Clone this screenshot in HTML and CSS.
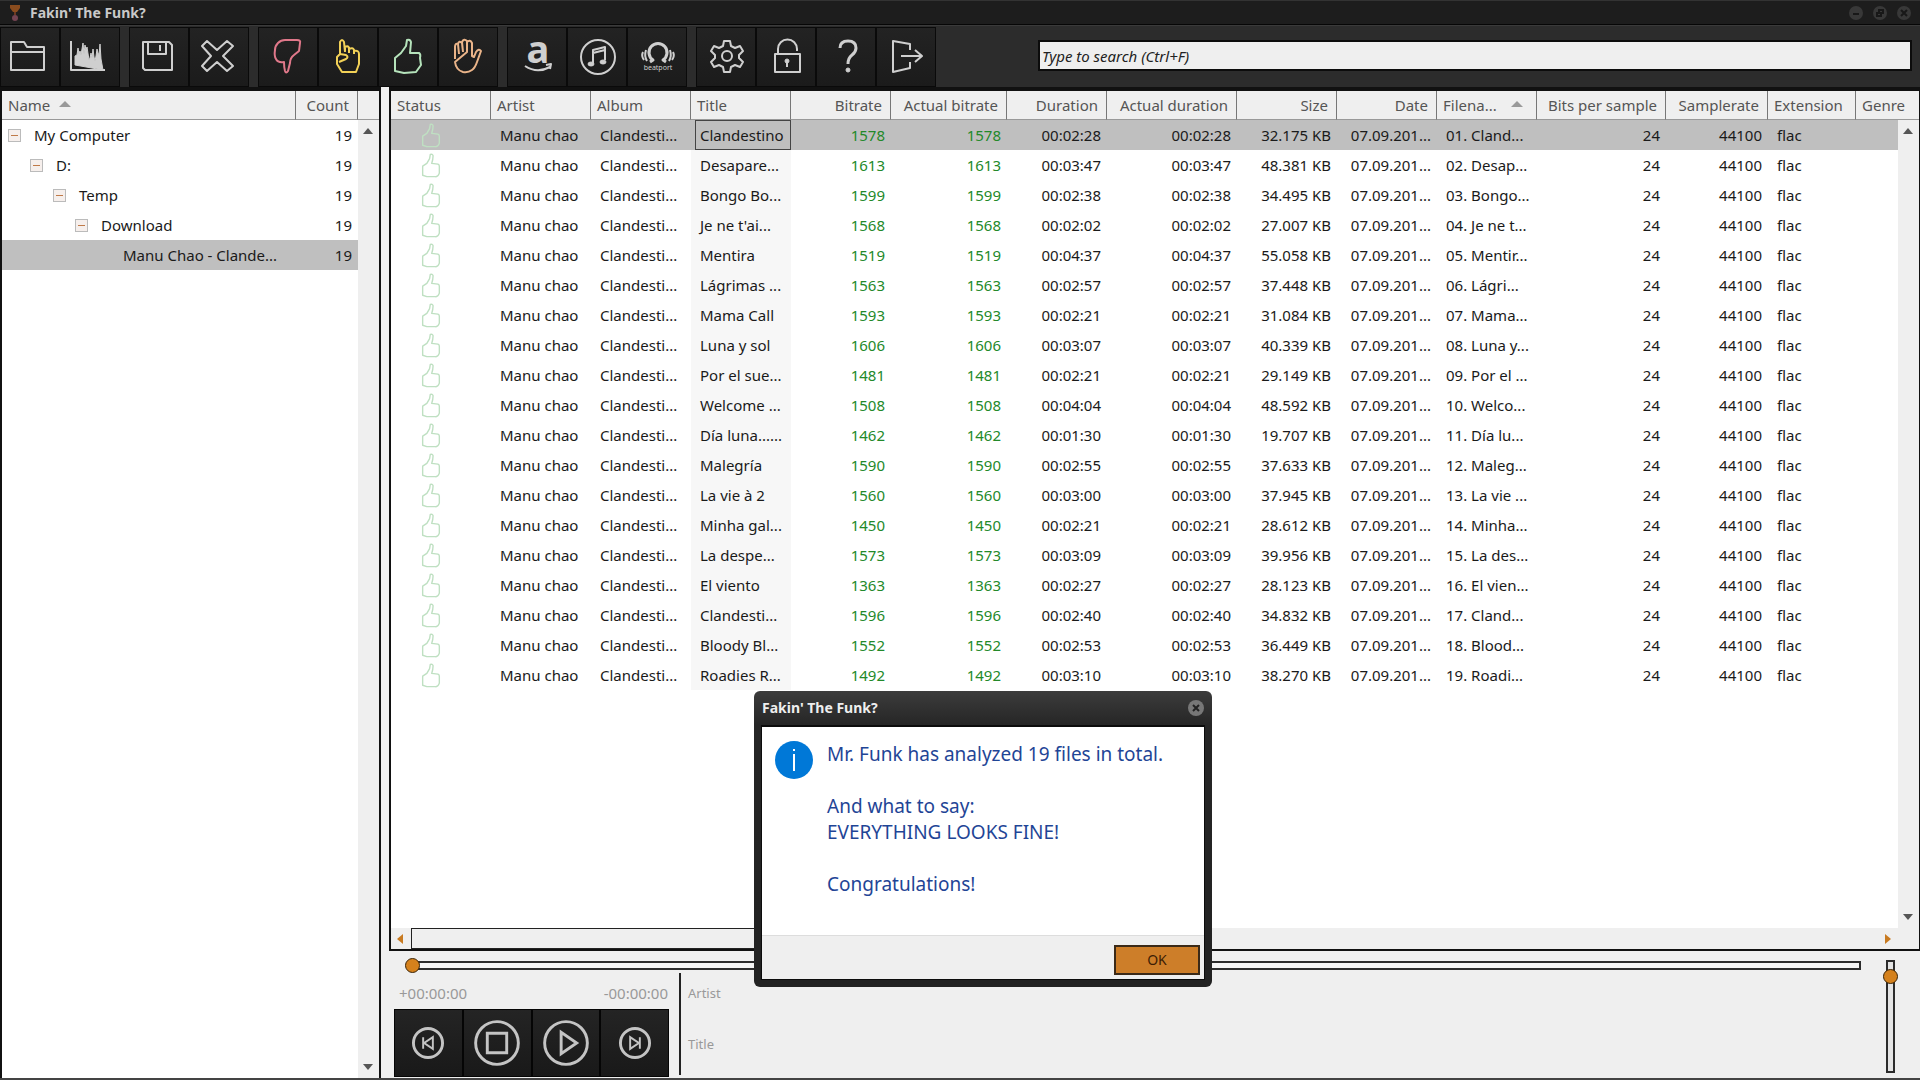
FILE: index.html
```html
<!DOCTYPE html>
<html lang="en">
<head>
<meta charset="utf-8">
<title>Fakin' The Funk?</title>
<link rel="stylesheet" href="styles.css">
</head>
<body>
<svg class="defs" aria-hidden="true">
  <symbol id="thumb" viewBox="0 0 28 36"><path d="M13 2q3-1 4 2 0 5-2 11l9 1q2 1 2 3v10q-2 6-6 5H8l-6-2V19l6-4 4-7Z"/></symbol>
</svg>
<div class="app">
  <header class="titlebar">
    <svg class="logo" viewBox="0 0 12 18" aria-hidden="true"><path d="M1 1h10v3l-3 4H4L1 4Z" fill="#8a4c1e"/><path d="M5 8h2v3H5Z" fill="#6b3a22"/><circle cx="6" cy="14" r="3" fill="#744452"/></svg>
    <h1>Fakin' The Funk?</h1>
    <div class="window-buttons">
      <button type="button" aria-label="Minimize"><svg viewBox="0 0 16 16"><circle cx="8" cy="8" r="7"/><path d="M5 9h6"/></svg></button>
      <button type="button" aria-label="Restore"><svg viewBox="0 0 16 16"><circle cx="8" cy="8" r="7"/><path d="M5 8h4v3H5ZM7 7V5h4v4"/></svg></button>
      <button type="button" aria-label="Close"><svg viewBox="0 0 16 16"><circle cx="8" cy="8" r="7"/><path d="M5 5l6 6M11 5l-6 6"/></svg></button>
    </div>
  </header>

  <div class="toolbar">
    <div class="group">
      <button type="button" aria-label="Open folder"><svg viewBox="0 0 60 60"><path d="M11 43V15H24L27 20H44V43ZM11 25H44"/></svg></button>
      <button type="button" aria-label="Spectrum"><svg viewBox="0 0 60 60"><path d="M11 14V43H45"/><path class="solid" d="M15 38V29l2-1 1-7 1 6 1-3 1 4 2-12 1 11 1-9 1 5 1-3 2 13 1-2 1-5 1 5 1-9 1 8 1 4 1-5 1-7 1 4 1 2 1-11 1 15 2 11Z"/></svg></button>
    </div>
    <div class="group">
      <button type="button" aria-label="Save"><svg viewBox="0 0 60 60"><path d="M14 15H40L43 18V43H16L14 41ZM19 15V27H37V15M31 18V24"/></svg></button>
      <button type="button" aria-label="Remove"><svg viewBox="0 0 60 60"><path d="M18 14l10 9 10-9 6 5-10 10 10 10-6 5-10-9-10 9-5-5 9-10-9-10Z"/></svg></button>
    </div>
    <div class="group">
      <button type="button" class="red" aria-label="Fake"><svg viewBox="0 0 60 60"><path d="M20 16q3-3 7-3h12q4 0 3 3l-1 8-5 4q-4 3-4 8l-2 8q-2 3-3 0-1-4-1-9-6 1-8-3-2-3-1-9 0-4 3-7Z"/></svg></button>
      <button type="button" class="yellow" aria-label="Warning"><svg viewBox="0 0 60 60"><path d="M22 28V15q2-4 4 0l1 10M27 24v-4q4-2 4 2v4M31 22q4-2 5 1v4M36 24q5-1 5 3v10l-3 8H24l-5-8v-7l3-3 6 1q3 2 0 4l-7 3"/></svg></button>
      <button type="button" class="green" aria-label="Good"><svg viewBox="0 0 60 60"><path d="M29 13q3-1 4 2l-1 11h9q2 1 1 5l1 7-5 7-12 1-9-2V31l6-5 5-7Z"/></svg></button>
      <button type="button" class="orange" aria-label="Stop analysis"><svg viewBox="0 0 60 60"><path d="M17 32V20q0-4 3-3l1 10M21 27l-1-10q1-4 4-1l1 9M25 25l-1-10q2-4 5-1v11M29 25V15q3-3 5 1v13l2 1 2-5q3-4 5-1l-4 11q-2 6-5 8-4 3-9 2-7-2-8-10Z"/></svg></button>
    </div>
    <div class="group">
      <button type="button" aria-label="Amazon"><svg viewBox="0 0 60 60"><text class="letter" x="31" y="36" text-anchor="middle">a</text><path class="thin" d="M18 39Q30 47 43 40M39 38l5-1-1 5"/></svg></button>
      <button type="button" aria-label="iTunes"><svg viewBox="0 0 60 60"><circle class="thin" cx="31" cy="30" r="17"/><path d="M26 36V23l12-3v13M26 26l12-3"/><ellipse class="solid" cx="24" cy="37" rx="3" ry="2"/><ellipse class="solid" cx="36" cy="35" rx="3" ry="2"/></svg></button>
      <button type="button" aria-label="Beatport"><svg viewBox="0 0 60 60"><path class="heavy" d="M23 35l3-2a9 9 0 1 1 10 0l3 2"/><path d="M20 34q-3-5-1-11M42 34q3-5 1-11M17 33q-3-4-1-8M45 33q3-4 1-8"/><text class="tiny" x="31" y="43" text-anchor="middle">beatport</text></svg></button>
    </div>
    <div class="group">
      <button type="button" aria-label="Settings"><svg viewBox="0 0 60 60"><path d="M28 14h6l1 5 4 2 5-2 3 5-4 4v3l4 4-3 5-5-2-4 2-1 5h-6l-1-5-4-2-5 2-3-5 4-4v-3l-4-4 3-5 5 2 4-2Z"/><circle cx="31" cy="29" r="5"/></svg></button>
      <button type="button" aria-label="Unlock"><svg viewBox="0 0 60 60"><path d="M19 27H44V45H19ZM22 27V22a9 9 0 0 1 19 0v2M31 35v5"/><circle class="solid" cx="31" cy="34" r="2"/></svg></button>
      <button type="button" aria-label="Help"><svg viewBox="0 0 60 60"><path class="heavy" d="M24 21q0-7 8-7t8 7q0 4-4 7-4 3-4 9"/><circle class="solid" cx="32" cy="43" r="2"/></svg></button>
      <button type="button" aria-label="Exit"><svg viewBox="0 0 60 60"><path d="M34 23V17L17 14V45L34 41V35M25 29H45M39 23l7 6-7 6"/></svg></button>
    </div>
    <input class="search" type="text" placeholder="Type to search (Ctrl+F)" aria-label="Search">
  </div>

  <div class="workspace">
    <aside class="folders">
      <table class="tree">
        <colgroup><col><col class="c-count"><col class="c-bar"></colgroup>
        <thead><tr><th>Name <span class="sort"></span></th><th class="num">Count</th><th></th></tr></thead>
        <tbody>
          <tr><td><div class="node l0"><button type="button" aria-label="Collapse"></button>My Computer</div></td><td class="num">19</td></tr>
          <tr><td><div class="node l1"><button type="button" aria-label="Collapse"></button>D:</div></td><td class="num">19</td></tr>
          <tr><td><div class="node l2"><button type="button" aria-label="Collapse"></button>Temp</div></td><td class="num">19</td></tr>
          <tr><td><div class="node l3"><button type="button" aria-label="Collapse"></button>Download</div></td><td class="num">19</td></tr>
          <tr class="selected"><td><div class="node l4">Manu Chao - Clande...</div></td><td class="num">19</td></tr>
        </tbody>
      </table>
      <div class="vbar"><span class="up"></span><span class="down"></span></div>
    </aside>

    <main class="main">
      <section class="files">
        <table class="tracks">
          <colgroup><col class="w100"><col class="w100"><col class="w100"><col class="w100"><col class="w100"><col class="w116"><col class="w100"><col class="w130"><col class="w100"><col class="w100"><col class="w100"><col class="w129"><col class="w102"><col class="w88"><col></colgroup>
          <thead><tr><th>Status</th><th>Artist</th><th>Album</th><th>Title</th><th class="num">Bitrate</th><th class="num">Actual bitrate</th><th class="num">Duration</th><th class="num">Actual duration</th><th class="num">Size</th><th class="num">Date</th><th>Filena... <span class="sort far"></span></th><th class="num">Bits per sample</th><th class="num">Samplerate</th><th>Extension</th><th>Genre</th></tr></thead>
          <tbody>
            <tr class="selected"><td><svg class="ok"><use href="#thumb"/></svg></td><td>Manu chao</td><td>Clandesti...</td><td class="title focus">Clandestino</td><td class="num rate">1578</td><td class="num rate">1578</td><td class="num">00:02:28</td><td class="num">00:02:28</td><td class="num">32.175 KB</td><td class="num">07.09.201...</td><td>01. Cland...</td><td class="num">24</td><td class="num">44100</td><td>flac</td><td></td></tr>
            <tr><td><svg class="ok"><use href="#thumb"/></svg></td><td>Manu chao</td><td>Clandesti...</td><td class="title">Desapare...</td><td class="num rate">1613</td><td class="num rate">1613</td><td class="num">00:03:47</td><td class="num">00:03:47</td><td class="num">48.381 KB</td><td class="num">07.09.201...</td><td>02. Desap...</td><td class="num">24</td><td class="num">44100</td><td>flac</td><td></td></tr>
            <tr><td><svg class="ok"><use href="#thumb"/></svg></td><td>Manu chao</td><td>Clandesti...</td><td class="title">Bongo Bo...</td><td class="num rate">1599</td><td class="num rate">1599</td><td class="num">00:02:38</td><td class="num">00:02:38</td><td class="num">34.495 KB</td><td class="num">07.09.201...</td><td>03. Bongo...</td><td class="num">24</td><td class="num">44100</td><td>flac</td><td></td></tr>
            <tr><td><svg class="ok"><use href="#thumb"/></svg></td><td>Manu chao</td><td>Clandesti...</td><td class="title">Je ne t'ai...</td><td class="num rate">1568</td><td class="num rate">1568</td><td class="num">00:02:02</td><td class="num">00:02:02</td><td class="num">27.007 KB</td><td class="num">07.09.201...</td><td>04. Je ne t...</td><td class="num">24</td><td class="num">44100</td><td>flac</td><td></td></tr>
            <tr><td><svg class="ok"><use href="#thumb"/></svg></td><td>Manu chao</td><td>Clandesti...</td><td class="title">Mentira</td><td class="num rate">1519</td><td class="num rate">1519</td><td class="num">00:04:37</td><td class="num">00:04:37</td><td class="num">55.058 KB</td><td class="num">07.09.201...</td><td>05. Mentir...</td><td class="num">24</td><td class="num">44100</td><td>flac</td><td></td></tr>
            <tr><td><svg class="ok"><use href="#thumb"/></svg></td><td>Manu chao</td><td>Clandesti...</td><td class="title">Lágrimas ...</td><td class="num rate">1563</td><td class="num rate">1563</td><td class="num">00:02:57</td><td class="num">00:02:57</td><td class="num">37.448 KB</td><td class="num">07.09.201...</td><td>06. Lágri...</td><td class="num">24</td><td class="num">44100</td><td>flac</td><td></td></tr>
            <tr><td><svg class="ok"><use href="#thumb"/></svg></td><td>Manu chao</td><td>Clandesti...</td><td class="title">Mama Call</td><td class="num rate">1593</td><td class="num rate">1593</td><td class="num">00:02:21</td><td class="num">00:02:21</td><td class="num">31.084 KB</td><td class="num">07.09.201...</td><td>07. Mama...</td><td class="num">24</td><td class="num">44100</td><td>flac</td><td></td></tr>
            <tr><td><svg class="ok"><use href="#thumb"/></svg></td><td>Manu chao</td><td>Clandesti...</td><td class="title">Luna y sol</td><td class="num rate">1606</td><td class="num rate">1606</td><td class="num">00:03:07</td><td class="num">00:03:07</td><td class="num">40.339 KB</td><td class="num">07.09.201...</td><td>08. Luna y...</td><td class="num">24</td><td class="num">44100</td><td>flac</td><td></td></tr>
            <tr><td><svg class="ok"><use href="#thumb"/></svg></td><td>Manu chao</td><td>Clandesti...</td><td class="title">Por el sue...</td><td class="num rate">1481</td><td class="num rate">1481</td><td class="num">00:02:21</td><td class="num">00:02:21</td><td class="num">29.149 KB</td><td class="num">07.09.201...</td><td>09. Por el ...</td><td class="num">24</td><td class="num">44100</td><td>flac</td><td></td></tr>
            <tr><td><svg class="ok"><use href="#thumb"/></svg></td><td>Manu chao</td><td>Clandesti...</td><td class="title">Welcome ...</td><td class="num rate">1508</td><td class="num rate">1508</td><td class="num">00:04:04</td><td class="num">00:04:04</td><td class="num">48.592 KB</td><td class="num">07.09.201...</td><td>10. Welco...</td><td class="num">24</td><td class="num">44100</td><td>flac</td><td></td></tr>
            <tr><td><svg class="ok"><use href="#thumb"/></svg></td><td>Manu chao</td><td>Clandesti...</td><td class="title">Día luna......</td><td class="num rate">1462</td><td class="num rate">1462</td><td class="num">00:01:30</td><td class="num">00:01:30</td><td class="num">19.707 KB</td><td class="num">07.09.201...</td><td>11. Día lu...</td><td class="num">24</td><td class="num">44100</td><td>flac</td><td></td></tr>
            <tr><td><svg class="ok"><use href="#thumb"/></svg></td><td>Manu chao</td><td>Clandesti...</td><td class="title">Malegría</td><td class="num rate">1590</td><td class="num rate">1590</td><td class="num">00:02:55</td><td class="num">00:02:55</td><td class="num">37.633 KB</td><td class="num">07.09.201...</td><td>12. Maleg...</td><td class="num">24</td><td class="num">44100</td><td>flac</td><td></td></tr>
            <tr><td><svg class="ok"><use href="#thumb"/></svg></td><td>Manu chao</td><td>Clandesti...</td><td class="title">La vie à 2</td><td class="num rate">1560</td><td class="num rate">1560</td><td class="num">00:03:00</td><td class="num">00:03:00</td><td class="num">37.945 KB</td><td class="num">07.09.201...</td><td>13. La vie ...</td><td class="num">24</td><td class="num">44100</td><td>flac</td><td></td></tr>
            <tr><td><svg class="ok"><use href="#thumb"/></svg></td><td>Manu chao</td><td>Clandesti...</td><td class="title">Minha gal...</td><td class="num rate">1450</td><td class="num rate">1450</td><td class="num">00:02:21</td><td class="num">00:02:21</td><td class="num">28.612 KB</td><td class="num">07.09.201...</td><td>14. Minha...</td><td class="num">24</td><td class="num">44100</td><td>flac</td><td></td></tr>
            <tr><td><svg class="ok"><use href="#thumb"/></svg></td><td>Manu chao</td><td>Clandesti...</td><td class="title">La despe...</td><td class="num rate">1573</td><td class="num rate">1573</td><td class="num">00:03:09</td><td class="num">00:03:09</td><td class="num">39.956 KB</td><td class="num">07.09.201...</td><td>15. La des...</td><td class="num">24</td><td class="num">44100</td><td>flac</td><td></td></tr>
            <tr><td><svg class="ok"><use href="#thumb"/></svg></td><td>Manu chao</td><td>Clandesti...</td><td class="title">El viento</td><td class="num rate">1363</td><td class="num rate">1363</td><td class="num">00:02:27</td><td class="num">00:02:27</td><td class="num">28.123 KB</td><td class="num">07.09.201...</td><td>16. El vien...</td><td class="num">24</td><td class="num">44100</td><td>flac</td><td></td></tr>
            <tr><td><svg class="ok"><use href="#thumb"/></svg></td><td>Manu chao</td><td>Clandesti...</td><td class="title">Clandesti...</td><td class="num rate">1596</td><td class="num rate">1596</td><td class="num">00:02:40</td><td class="num">00:02:40</td><td class="num">34.832 KB</td><td class="num">07.09.201...</td><td>17. Cland...</td><td class="num">24</td><td class="num">44100</td><td>flac</td><td></td></tr>
            <tr><td><svg class="ok"><use href="#thumb"/></svg></td><td>Manu chao</td><td>Clandesti...</td><td class="title">Bloody Bl...</td><td class="num rate">1552</td><td class="num rate">1552</td><td class="num">00:02:53</td><td class="num">00:02:53</td><td class="num">36.449 KB</td><td class="num">07.09.201...</td><td>18. Blood...</td><td class="num">24</td><td class="num">44100</td><td>flac</td><td></td></tr>
            <tr><td><svg class="ok"><use href="#thumb"/></svg></td><td>Manu chao</td><td>Clandesti...</td><td class="title">Roadies R...</td><td class="num rate">1492</td><td class="num rate">1492</td><td class="num">00:03:10</td><td class="num">00:03:10</td><td class="num">38.270 KB</td><td class="num">07.09.201...</td><td>19. Roadi...</td><td class="num">24</td><td class="num">44100</td><td>flac</td><td></td></tr>
          </tbody>
        </table>
        <div class="vbar short"><span class="up"></span><span class="down"></span></div>
        <div class="hbar"><span class="left"></span><span class="grip"></span><span class="right"></span></div>
      </section>

      <section class="player">
        <div class="deck">
          <input class="seek" type="range" min="0" max="100" value="0" aria-label="Position">
          <div class="deck-row">
            <div class="transport">
              <div class="times"><span>+00:00:00</span><span>-00:00:00</span></div>
              <div class="controls">
                <button type="button" aria-label="Previous"><svg viewBox="0 0 68 68"><circle cx="34" cy="34" r="15"/><path class="fine" d="M29 28V40M39 28V40L30 34Z"/></svg></button>
                <button type="button" aria-label="Stop"><svg viewBox="0 0 68 68"><circle cx="34" cy="34" r="22"/><path d="M24 24H44V44H24Z"/></svg></button>
                <button type="button" aria-label="Play"><svg viewBox="0 0 68 68"><circle cx="34" cy="34" r="22"/><path d="M29 23V45L45 34Z"/></svg></button>
                <button type="button" aria-label="Next"><svg viewBox="0 0 68 68"><circle cx="34" cy="34" r="15"/><path class="fine" d="M39 28V40M29 28V40L38 34Z"/></svg></button>
              </div>
            </div>
            <div class="meta"><span>Artist</span><span>Title</span></div>
          </div>
        </div>
        <input class="volume" type="range" min="0" max="100" value="93" aria-label="Volume">
      </section>
    </main>
  </div>
</div>

<dialog class="dialog" open aria-labelledby="dialog-title">
  <div class="dialog-head">
    <h2 id="dialog-title">Fakin' The Funk?</h2>
    <button type="button" aria-label="Close"><svg viewBox="0 0 16 16"><circle cx="8" cy="8" r="8"/><path d="M5 5l6 6M11 5l-6 6"/></svg></button>
  </div>
  <div class="dialog-body">
    <svg class="info" viewBox="0 0 38 38" aria-hidden="true"><circle cx="19" cy="19" r="19" fill="#0078d7"/><path d="M19 13V30M19 8V10" stroke="#fff" stroke-width="2"/></svg>
    <div class="message">
      <p>Mr. Funk has analyzed 19 files in total.</p>
      <p>And what to say:<br>EVERYTHING LOOKS FINE!</p>
      <p>Congratulations!</p>
    </div>
  </div>
  <div class="dialog-foot"><button type="button">OK</button></div>
</dialog>
</body>
</html>
```
FILE: styles.css
```css
* { box-sizing: border-box; }

body {
  margin: 0;
  background: #efefef;
  color: #1a1a1a;
  font: 15px/20px "Noto Sans", sans-serif;
}

button, input { font: inherit; margin: 0; }
button { padding: 0; border: 0; background: none; }
h1, h2, p { margin: 0; }
svg { display: block; }
.defs { position: absolute; width: 0; height: 0; }

.app {
  display: grid;
  grid-template-rows: 25px 62px minmax(0, 1fr);
  height: 100vh;
  border-bottom: 2px solid #444;
  overflow: hidden;
}

/* Title bar */
.titlebar {
  display: flex;
  align-items: center;
  gap: 9px;
  padding: 0 8px 0 9px;
  background: #1d1d1d;
  border-top: 1px solid #333;
  border-bottom: 1px solid #060606;
}
.logo { width: 12px; height: 18px; }
.titlebar h1 {
  flex: 1;
  color: #c9c9c9;
  font-size: 14px;
  line-height: 20px;
}
.window-buttons { display: flex; gap: 8px; }
.window-buttons svg { width: 16px; height: 16px; }
.window-buttons circle { fill: #383838; }
.window-buttons path { fill: none; stroke: #181818; stroke-width: 2; }

/* Toolbar */
.toolbar {
  display: flex;
  align-items: flex-start;
  gap: 9px;
  padding: 1px 8px 0 0;
  background: #2c2c2c;
  border-top: 1px solid #3a3a3a;
}
.group { display: flex; }
.group button {
  width: 60px;
  height: 60px;
  color: #cfcfcf;
  background: linear-gradient(#232323, #1b1b1b);
  border: 1px solid #0a0a0a;
}
.group svg { width: 60px; height: 60px; margin: -1px; overflow: visible; }
.group path, .group circle, .group ellipse {
  fill: none;
  stroke: currentColor;
  stroke-width: 2;
  stroke-linejoin: round;
}
.group .solid { fill: currentColor; stroke-width: 1; }
.group .heavy { stroke-width: 3; }
.group text { fill: currentColor; }
.letter { font-size: 38px; font-weight: bold; }
.tiny { font: 7px "Noto Sans", sans-serif; }
.group .red { color: #e0788a; }
.group .yellow { color: #f2d157; }
.group .green { color: #b5e3bb; }
.group .orange { color: #eab489; }
.search {
  flex: 1;
  height: 31px;
  margin: 13px 0 0 93px;
  padding: 0 2px;
  background: #efefef;
  border: 2px solid #0c0c0c;
  border-radius: 0;
  font-style: italic;
}
.search::placeholder { color: #222; opacity: 1; }

/* Panels */
.workspace {
  display: grid;
  grid-template-columns: 381px minmax(0, 1fr);
  gap: 8px;
  min-height: 0;
}
.folders, .files {
  position: relative;
  background: #fff;
  border: 2px solid #111;
  border-top-width: 4px;
}
.folders { border-bottom: 0; }
.files { border-right-width: 1px; }
.main {
  display: grid;
  grid-template-rows: minmax(0, 1fr) 127px;
  min-height: 0;
}

table {
  width: 100%;
  table-layout: fixed;
  border-collapse: separate;
  border-spacing: 0;
}
th, td { white-space: nowrap; text-align: left; overflow: hidden; }
th {
  height: 29px;
  padding: 0 8px 0 6px;
  background: #efefef;
  border-right: 1px solid #777;
  border-bottom: 1px solid #999;
  color: #555;
  font-weight: normal;
}
th:last-child { border-right: 0; }
td { height: 30px; padding: 0 6px 0 9px; }
.num { text-align: right; }
.selected td { background: #bfbfbf; }
.sort {
  display: inline-block;
  margin: 0 0 4px 5px;
  border: solid transparent;
  border-width: 0 6px 6px;
  border-bottom-color: #999;
}
.far { margin-left: 10px; }

.c-count { width: 62px; }
.c-bar { width: 21px; }
.w88 { width: 88px; }
.w100 { width: 100px; }
.w102 { width: 102px; }
.w116 { width: 116px; }
.w129 { width: 129px; }
.w130 { width: 130px; }

/* Folder tree */
.tree td:first-child { padding-left: 6px; }
.node { display: flex; align-items: center; gap: 13px; }
.node button {
  width: 13px;
  height: 13px;
  background: linear-gradient(#c07a48, #c07a48) center / 7px 1px no-repeat #f6efec;
  border: 1px solid #bbb;
}
.l1 { padding-left: 22px; }
.l2 { padding-left: 45px; }
.l3 { padding-left: 67px; }
.l4 { padding-left: 115px; }

/* Track list */
.ok {
  width: 20px;
  height: 25px;
  margin-left: 21px;
  fill: none;
  stroke: #bfe0c2;
  stroke-width: 2;
  stroke-linejoin: round;
}
.title { background: #f7f7f7; }
.selected .focus {
  background: linear-gradient(#bfbfbf, #bfbfbf);
  box-shadow: inset 4px 0 #bfbfbf, inset 5px 0 #444, inset 0 0 0 1px #444;
}
.rate { color: #23892a; }

/* Scrollbars */
.vbar {
  position: absolute;
  top: 29px;
  right: 0;
  bottom: 0;
  width: 21px;
  display: flex;
  flex-direction: column;
  justify-content: space-between;
  align-items: center;
  padding: 8px 2px 8px 0;
  background: #efefef;
}
.vbar.short { bottom: 21px; }
.up, .down { border: solid transparent; border-width: 0 5px 6px; border-bottom-color: #555; }
.down { border-width: 6px 5px 0; border-top-color: #555; }
.hbar {
  position: absolute;
  right: 0;
  bottom: 0;
  left: 0;
  height: 21px;
  display: flex;
  align-items: center;
  gap: 8px;
  padding: 0 28px 0 6px;
  background: #efefef;
}
.left, .right { border: solid transparent; border-width: 5px 6px 5px 0; border-right-color: #c87a20; }
.right { border-width: 5px 0 5px 6px; border-left-color: #c87a20; margin-left: auto; }
.grip { width: 50%; height: 21px; border: 1px solid #222; }

/* Player */
.player {
  display: flex;
  gap: 22px;
  padding: 6px 22px 2px 5px;
}
.deck { flex: 1; display: flex; flex-direction: column; gap: 3px; }
.seek, .volume { appearance: none; background: none; }
.seek { display: block; height: 15px; margin: 4px 0 0 16px; }
.seek::-webkit-slider-runnable-track { height: 9px; border: 2px solid #2b2b2b; background: #f4f4f4; }
.seek::-webkit-slider-thumb {
  appearance: none;
  width: 15px;
  height: 15px;
  margin: -5px 0 0 -7px;
  background: #d5811c;
  border: 1px solid #3a2408;
  border-radius: 50%;
}
.volume {
  writing-mode: vertical-lr;
  direction: rtl;
  width: 15px;
  height: 113px;
  margin-top: 3px;
}
.volume::-webkit-slider-runnable-track { width: 9px; border: 2px solid #2b2b2b; background: #e4e4e4; }
.volume::-webkit-slider-thumb {
  appearance: none;
  width: 15px;
  height: 15px;
  margin-left: -5px;
  background: #d5811c;
  border: 1px solid #3a2408;
  border-radius: 50%;
}
.deck-row { display: flex; gap: 10px; color: #999; }
.transport { width: 275px; padding-top: 10px; }
.times { display: flex; justify-content: space-between; padding: 0 1px 6px 5px; }
.controls { display: flex; }
.controls button {
  flex: 1;
  height: 68px;
  background: linear-gradient(#242424, #191919);
  border: 1px solid #050505;
}
.controls svg { width: 66px; height: 66px; margin: auto; }
.controls path, .controls circle { fill: none; stroke: #c4c4c4; stroke-width: 3; }
.controls .fine { stroke-width: 2; }
.meta {
  display: flex;
  flex-direction: column;
  gap: 31px;
  height: 102px;
  padding: 10px 7px;
  border-left: 2px solid #222;
  font-size: 13px;
}

/* Message box */
.dialog {
  position: fixed;
  top: 691px;
  left: 754px;
  width: 458px;
  margin: 0;
  padding: 0 7px 7px;
  background: linear-gradient(#3c3c3c, #262626 34px, #222);
  border: 0;
  border-radius: 6px;
  outline: 0;
}
.dialog-head {
  display: flex;
  align-items: center;
  justify-content: space-between;
  height: 34px;
  padding: 0 1px;
}
.dialog-head h2 { color: #eee; font-size: 14px; line-height: 20px; }
.dialog-head svg { width: 16px; height: 16px; }
.dialog-head circle { fill: #777; }
.dialog-head path { stroke: #222; stroke-width: 2; }
.dialog-body {
  display: flex;
  gap: 14px;
  height: 210px;
  padding: 14px 13px;
  background: #fff;
  border: solid #0c0c0c;
  border-width: 2px 1px 0;
}
.info { width: 38px; height: 38px; }
.message {
  display: flex;
  flex-direction: column;
  gap: 26px;
  color: #1f4596;
  font-size: 19px;
  line-height: 26px;
}
.dialog-foot {
  display: flex;
  justify-content: flex-end;
  padding: 10px 4px 4px;
  background: #efefef;
  border: solid #0c0c0c;
  border-width: 0 1px 1px;
  box-shadow: inset 0 1px #ddd;
}
.dialog-foot button {
  width: 86px;
  height: 30px;
  background: #cd7e29;
  border: 2px solid #3b2a18;
  color: #3c1d05;
  font-size: 14px;
}
```
